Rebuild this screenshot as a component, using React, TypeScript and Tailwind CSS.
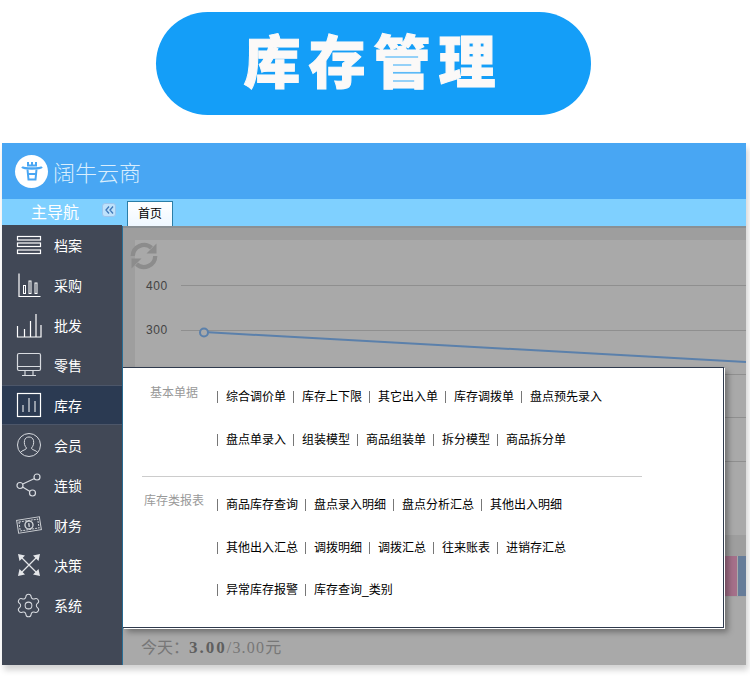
import { ReactNode } from "react";
import { Settings } from "lucide-react";

const cjk = "font-['Liberation_Sans','Noto_Sans_CJK_SC',sans-serif]";

const Icon = ({ children }: { children: ReactNode }) => (
    <svg width="26" height="26" viewBox="0 0 26 26" fill="none" stroke="#fff" strokeWidth="1" className="shrink-0">
        {children}
    </svg>
);

const navItems: { label: string; active?: boolean; icon: ReactNode }[] = [
    {
        label: "档案",
        icon: (
            <Icon>
                <rect x="1.5" y="4.5" width="23" height="3.5" strokeWidth="1.2" />
                <rect x="1.5" y="11" width="23" height="3.5" strokeWidth="1.2" />
                <rect x="1.5" y="18" width="23" height="3.5" strokeWidth="1.2" />
            </Icon>
        ),
    },
    {
        label: "采购",
        icon: (
            <Icon>
                <path d="M3 1.5V24.5H24.5" strokeWidth="1.2" />
                <rect x="7.5" y="13.5" width="2" height="8" />
                <rect x="13" y="9" width="2" height="12.5" />
                <rect x="19" y="11" width="2" height="10.5" />
            </Icon>
        ),
    },
    {
        label: "批发",
        icon: (
            <Icon>
                <path d="M1.5 14V25H25V13M8.5 25V17M14.5 25V9M20 25V2" strokeWidth="1.2" />
            </Icon>
        ),
    },
    {
        label: "零售",
        icon: (
            <Icon>
                <rect x="1.5" y="1.5" width="23" height="17" rx="1.5" strokeWidth="1.2" stroke="#d8dbe0" />
                <path d="M1.5 14.5H24.5M9 18.5V23M17 18.5V23M6 23.5H20" strokeWidth="1.2" stroke="#d8dbe0" />
            </Icon>
        ),
    },
    {
        label: "库存",
        active: true,
        icon: (
            <Icon>
                <rect x="1.5" y="1.5" width="23" height="23" strokeWidth="1.2" />
                <path d="M7 20V13M13 20V6M19 20V9" />
            </Icon>
        ),
    },
    {
        label: "会员",
        icon: (
            <Icon>
                <g stroke="#d8dbe0">
                    <circle cx="13" cy="13" r="11.5" />
                    <path d="M4.5 20.5C6 18 10.5 18 10.5 16C8.5 14 8 11 8.5 8.5C9 6 11 5 13 5C15 5 17 6 17.5 8.5C18 11 17.5 14 15.5 16C15.5 18 20 18 21.5 20.5" />
                </g>
            </Icon>
        ),
    },
    {
        label: "连锁",
        icon: (
            <Icon>
                <g stroke="#d8dbe0" strokeWidth="1.2">
                    <circle cx="21" cy="5" r="3" />
                    <circle cx="4" cy="13.5" r="3" />
                    <circle cx="16.5" cy="21" r="3" />
                    <path d="M18.5 6.5L6.8 12M6.6 15L14 19.5" />
                </g>
            </Icon>
        ),
    },
    {
        label: "财务",
        icon: (
            <Icon>
                <g stroke="#cfd2d6" transform="rotate(-9 13 13)">
                    <rect x="1.5" y="6.5" width="23" height="13" />
                    <rect x="3.5" y="8.5" width="19" height="9" strokeDasharray="2 1" />
                    <circle cx="13" cy="13" r="4" strokeWidth="1.4" />
                    <path d="M13 11V15" strokeWidth="1.4" />
                </g>
            </Icon>
        ),
    },
    {
        label: "决策",
        icon: (
            <Icon>
                <path d="M5 5L21 21M21 5L5 21" stroke="#e4e6e9" strokeWidth="1.2" />
                <path d="M2 2L9 3.5L3.5 9ZM24 2L22.5 9L17 3.5ZM2 24L3.5 17L9 22.5ZM24 24L17 22.5L22.5 17Z" fill="#e4e6e9" stroke="none" />
            </Icon>
        ),
    },
    {
        label: "系统",
        icon: <Settings size={27} strokeWidth={0.9} color="#d8dbe0" className="shrink-0 -ml-px" />,
    },
];

const groups = [
    {
        title: "基本单据",
        rows: [
            ["综合调价单", "库存上下限", "其它出入单", "库存调拨单", "盘点预先录入"],
            ["盘点单录入", "组装模型", "商品组装单", "拆分模型", "商品拆分单"],
        ],
    },
    {
        title: "库存类报表",
        rows: [
            ["商品库存查询", "盘点录入明细", "盘点分析汇总", "其他出入明细"],
            ["其他出入汇总", "调拨明细", "调拨汇总", "往来账表", "进销存汇总"],
            ["异常库存报警", "库存查询_类别"],
        ],
    },
];

const MenuGroup = ({ title, rows }: { title: string; rows: string[][] }) => (
    <div className="flex">
        <div className="w-[64px] shrink-0 pt-px text-center text-xs leading-[14px] text-[#999]">{title}</div>
        <div className="ml-[11px] flex flex-col">
            {rows.map((row) => (
                <div key={row[0]} className="flex h-[42.5px] items-start pt-[5px]">
                    {row.map((item) => (
                        <span key={item} className="mr-[7px] flex items-center text-xs leading-[14px] text-black">
                            <span className="mr-[8px] h-[12px] w-px bg-[#777]" />
                            {item}
                        </span>
                    ))}
                </div>
            ))}
        </div>
    </div>
);

const Chart = () => (
    <svg width="611" height="295" viewBox="0 0 611 295" className="block">
        <g stroke="#8f8f8f">
            <line x1="46" y1="45.5" x2="611" y2="45.5" />
            <line x1="46" y1="90.5" x2="611" y2="90.5" />
            <line x1="46" y1="134.5" x2="611" y2="134.5" />
            <line x1="46" y1="177.5" x2="611" y2="177.5" />
            <line x1="46" y1="221.5" x2="611" y2="221.5" />
        </g>
        <g fill="#444" fontSize="12" fontFamily="'Liberation Sans', sans-serif" letterSpacing="0.6">
            <text x="11" y="50">400</text>
            <text x="11" y="94">300</text>
        </g>
        <line x1="69" y1="92" x2="611" y2="122" stroke="#5b80ab" strokeWidth="2" />
        <circle cx="69" cy="92.5" r="4" fill="#a9a9a9" stroke="#5b80ab" strokeWidth="2" />
    </svg>
);

const App = () => {
    return (
        <div className={`h-[684px] w-[750px] overflow-hidden bg-white pt-[12px] ${cjk}`}>
            <div className="ml-[156px] flex h-[103px] w-[435px] items-center justify-center rounded-[52px] bg-[#149ef8]">
                <span className="text-[57px] leading-none font-black tracking-[8px] text-[#fbf9f8] [-webkit-text-stroke:1px_#fbf9f8]">库存管理</span>
            </div>

            <div className="mt-[28px] ml-[2px] flex h-[522px] w-[744px] flex-col shadow-[2px_5px_6px_rgba(0,0,0,0.18)]">
                <div className="flex h-[56px] shrink-0 items-center bg-[#48a6f3] pl-[13px]">
                    <div className="flex h-[33px] w-[33px] items-center justify-center rounded-full bg-white">
                        <svg width="22" height="20" viewBox="0 0 22 20" fill="none" stroke="#48a6f3" strokeWidth="2">
                            <path d="M7 1V4.5H15V1M11 1V4.5" />
                            <path d="M1 6C3 8 19 8 21 6" strokeWidth="2.4" />
                            <path d="M6.5 8.5L7.5 18.5H14.5L15.5 8.5M7 13H15" />
                        </svg>
                    </div>
                    <span className="mt-[5px] ml-[5px] text-[22px] leading-none font-light text-[#d9eefd]">阔牛云商</span>
                </div>

                <div className="flex h-[27px] shrink-0 bg-[#7fd0ff]">
                    <div className="relative w-[120px] shrink-0">
                        <span className="absolute top-[5px] left-[29px] text-base leading-[18px] text-white">主导航</span>
                        <div className="absolute top-[4px] left-[100px] flex h-[14px] w-[14px] items-center justify-center rounded-[3px] border border-[#9cc6ee] bg-[#bfe2fb]">
                            <svg width="9" height="8" viewBox="0 0 9 8" fill="none" stroke="#3f78b8" strokeWidth="1.3">
                                <path d="M4 0.5L1 4L4 7.5M8 0.5L5 4L8 7.5" />
                            </svg>
                        </div>
                    </div>
                    <div className="mt-[2px] ml-[5px] flex h-[26px] w-[46px] items-center justify-center border border-b-0 border-[#2a7ea8] bg-gradient-to-b from-white to-[#eef7ff] pb-px text-xs text-black">
                        首页
                    </div>
                </div>

                <div className="flex min-h-0 flex-1">
                    <div className="-mt-px w-[120px] shrink-0 bg-[#414856]">
                        {navItems.map((item) => (
                            <div
                                key={item.label}
                                className={`flex h-[40px] items-center pl-[14px] ${item.active ? "border-y border-[#4c5669] bg-[#2b3a52]" : ""}`}
                            >
                                {item.icon}
                                <span className="ml-[12px] pt-px text-sm leading-none text-white">{item.label}</span>
                            </div>
                        ))}
                    </div>

                    <div className="relative min-w-0 flex-1 border-l border-[#2a6f96] bg-[#a9a9a9]">
                        <div className="h-[2px] bg-[#8a9094]" />
                        <div className="h-[307px] bg-[#9e9e9e] pt-[12px] pl-[12px]">
                            <div className="h-[295px] bg-[#a9a9a9]">
                                <Chart />
                            </div>
                        </div>
                        <div className="h-[21px] bg-[#9e9e9e]" />
                        <div className="flex h-[40px] justify-end bg-[#a9a9a9]">
                            <div className="w-[14px] bg-[#a5708a]" />
                            <div className="ml-px w-[8px] bg-[#667c99]" />
                        </div>
                        <div className="flex h-[69px] border-t border-[#a4a4a4] pl-[8px]">
                            <div className="flex-1 bg-[#a9a9a9] pt-[42px] pl-[10px] font-['Liberation_Serif','Noto_Sans_CJK_SC',serif] text-base leading-[18px] text-[#777]">
                                今天：<b className="text-[17px] tracking-[2px] text-[#5f5f5f]">3.00</b><span className="tracking-[1.2px]">/3.00</span>元
                            </div>
                        </div>

                        <svg
                            width="30"
                            height="30"
                            viewBox="0 0 24 24"
                            fill="none"
                            stroke="#8c8c8c"
                            strokeWidth="3.4"
                            className="absolute top-[15px] left-[6px]"
                        >
                            <path d="M3 12A9 9 0 0 1 18 5.5" />
                            <path d="M21 12A9 9 0 0 1 6 18.5" />
                            <path d="M22 2V10H14Z" fill="#8c8c8c" stroke="none" />
                            <path d="M2 22V14H10Z" fill="#8c8c8c" stroke="none" />
                        </svg>

                        <div className="absolute top-[141px] left-0 h-[261px] w-[601px] border border-l-0 border-[#2f3a4d] bg-white pt-[17px] pl-[19px] shadow-[1px_1px_0_#fff,4px_4px_6px_rgba(0,0,0,0.35)]">
                            <MenuGroup title={groups[0].title} rows={groups[0].rows} />
                            <div className="mt-[6px] mb-[16px] h-px w-[500px] bg-[#ccc]" />
                            <MenuGroup title={groups[1].title} rows={groups[1].rows} />
                        </div>
                    </div>
                </div>
            </div>
        </div>
    );
};

export default App;
